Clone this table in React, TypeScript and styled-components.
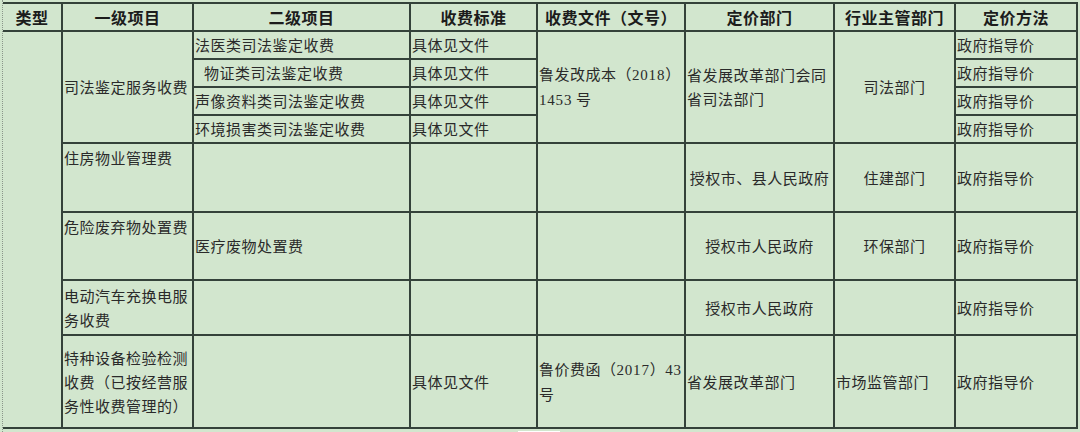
import React from 'react';
import styled, { createGlobalStyle } from 'styled-components';

const GlobalStyle = createGlobalStyle`
  html, body {
    margin: 0;
    padding: 0;
    background: #d2e6ce;
  }
  body {
    font-family: 'Noto Sans CJK SC', 'Noto Sans', sans-serif;
  }
`;

const LINE = '#34423a';

const Page = styled.div`
  width: 1080px;
  height: 432px;
  overflow: hidden;
  box-sizing: border-box;
  padding-top: 2px;
  margin-left: 2px;
  border-left: 1px dotted #8a968a;
`;

const Table = styled.table`
  border-collapse: collapse;
  table-layout: fixed;
  width: 1074px;
  color: #2a2a2a;
  font-size: 15px;
  letter-spacing: 0.5px;
  line-height: 24px;
`;

const HeadRow = styled.tr`
  height: 28px;
`;

const Row = styled.tr<{ $h: number }>`
  height: ${({ $h }) => $h}px;
`;

const HeadCell = styled.th<{ $first?: boolean }>`
  border: 2px solid ${LINE};
  border-left: ${({ $first }) => ($first ? 'none' : `2px solid ${LINE}`)};
  font-size: 16px;
  font-weight: 700;
  color: #1c1c1c;
  text-align: center;
  padding: 0;
  white-space: nowrap;
  overflow: hidden;
`;

const Cell = styled.td<{ $center?: boolean; $top?: boolean; $first?: boolean; $indent?: boolean }>`
  border: 2px solid ${LINE};
  border-left: ${({ $first }) => ($first ? 'none' : `2px solid ${LINE}`)};
  text-align: ${({ $center }) => ($center ? 'center' : 'left')};
  vertical-align: ${({ $top }) => ($top ? 'top' : 'middle')};
  padding: ${({ $top }) => ($top ? '2px 1px 0 1px' : '0 1px')};
  padding-left: ${({ $indent }) => ($indent ? '10px' : '1px')};
`;

// digits in the document numbers are set in a narrower serif face
const Num = styled.span`
  font-family: 'Liberation Serif', serif;
  font-size: 15px;
  letter-spacing: 0.8px;
`;

const Footer = styled.div`
  display: flex;
  height: 4px;
  padding-left: 515px;
  align-items: flex-end;
`;

const Thumb = styled.div`
  width: 42px;
  height: 2px;
  background: #ffffff;
`;

const widths = [59, 131, 217, 127, 148, 149, 121, 122];
const headers = ['类型', '一级项目', '二级项目', '收费标准', '收费文件（文号）', '定价部门', '行业主管部门', '定价方法'];
const forensic = ['法医类司法鉴定收费', '物证类司法鉴定收费', '声像资料类司法鉴定收费', '环境损害类司法鉴定收费'];
const GUIDE = '政府指导价';
const SEE = '具体见文件';

export default function App() {
  return (
    <>
      <GlobalStyle />
      <Page>
        <Table>
          <colgroup>
            {widths.map((w, i) => (
              <col key={i} style={{ width: w }} />
            ))}
          </colgroup>
          <thead>
            <HeadRow>
              {headers.map((h, i) => (
                <HeadCell key={h} $first={i === 0}>
                  {h}
                </HeadCell>
              ))}
            </HeadRow>
          </thead>
          <tbody>
            {forensic.map((item, i) => (
              <Row $h={28} key={item}>
                {i === 0 && (
                  <>
                    <Cell $first rowSpan={8} />
                    <Cell rowSpan={4}>司法鉴定服务收费</Cell>
                  </>
                )}
                <Cell $indent={i === 1}>{item}</Cell>
                <Cell>{SEE}</Cell>
                {i === 0 && (
                  <>
                    <Cell rowSpan={4}>
                      鲁发改成本（<Num>2018</Num>）<Num>1453</Num> 号
                    </Cell>
                    <Cell rowSpan={4}>省发展改革部门会同省司法部门</Cell>
                    <Cell rowSpan={4} $center>
                      司法部门
                    </Cell>
                  </>
                )}
                <Cell>{GUIDE}</Cell>
              </Row>
            ))}
            <Row $h={69}>
              <Cell $top>住房物业管理费</Cell>
              <Cell />
              <Cell />
              <Cell />
              <Cell $center>授权市、县人民政府</Cell>
              <Cell $center>住建部门</Cell>
              <Cell>{GUIDE}</Cell>
            </Row>
            <Row $h={68}>
              <Cell $top>危险废弃物处置费</Cell>
              <Cell>医疗废物处置费</Cell>
              <Cell />
              <Cell />
              <Cell $center>授权市人民政府</Cell>
              <Cell $center>环保部门</Cell>
              <Cell>{GUIDE}</Cell>
            </Row>
            <Row $h={55}>
              <Cell>电动汽车充换电服务收费</Cell>
              <Cell />
              <Cell />
              <Cell />
              <Cell $center>授权市人民政府</Cell>
              <Cell />
              <Cell>{GUIDE}</Cell>
            </Row>
            <Row $h={93}>
              <Cell>特种设备检验检测收费（已按经营服务性收费管理的）</Cell>
              <Cell />
              <Cell>{SEE}</Cell>
              <Cell>
                鲁价费函（<Num>2017</Num>）<Num>43</Num>号
              </Cell>
              <Cell>省发展改革部门</Cell>
              <Cell>市场监管部门</Cell>
              <Cell>{GUIDE}</Cell>
            </Row>
          </tbody>
        </Table>
        <Footer>
          <Thumb />
        </Footer>
      </Page>
    </>
  );
}
